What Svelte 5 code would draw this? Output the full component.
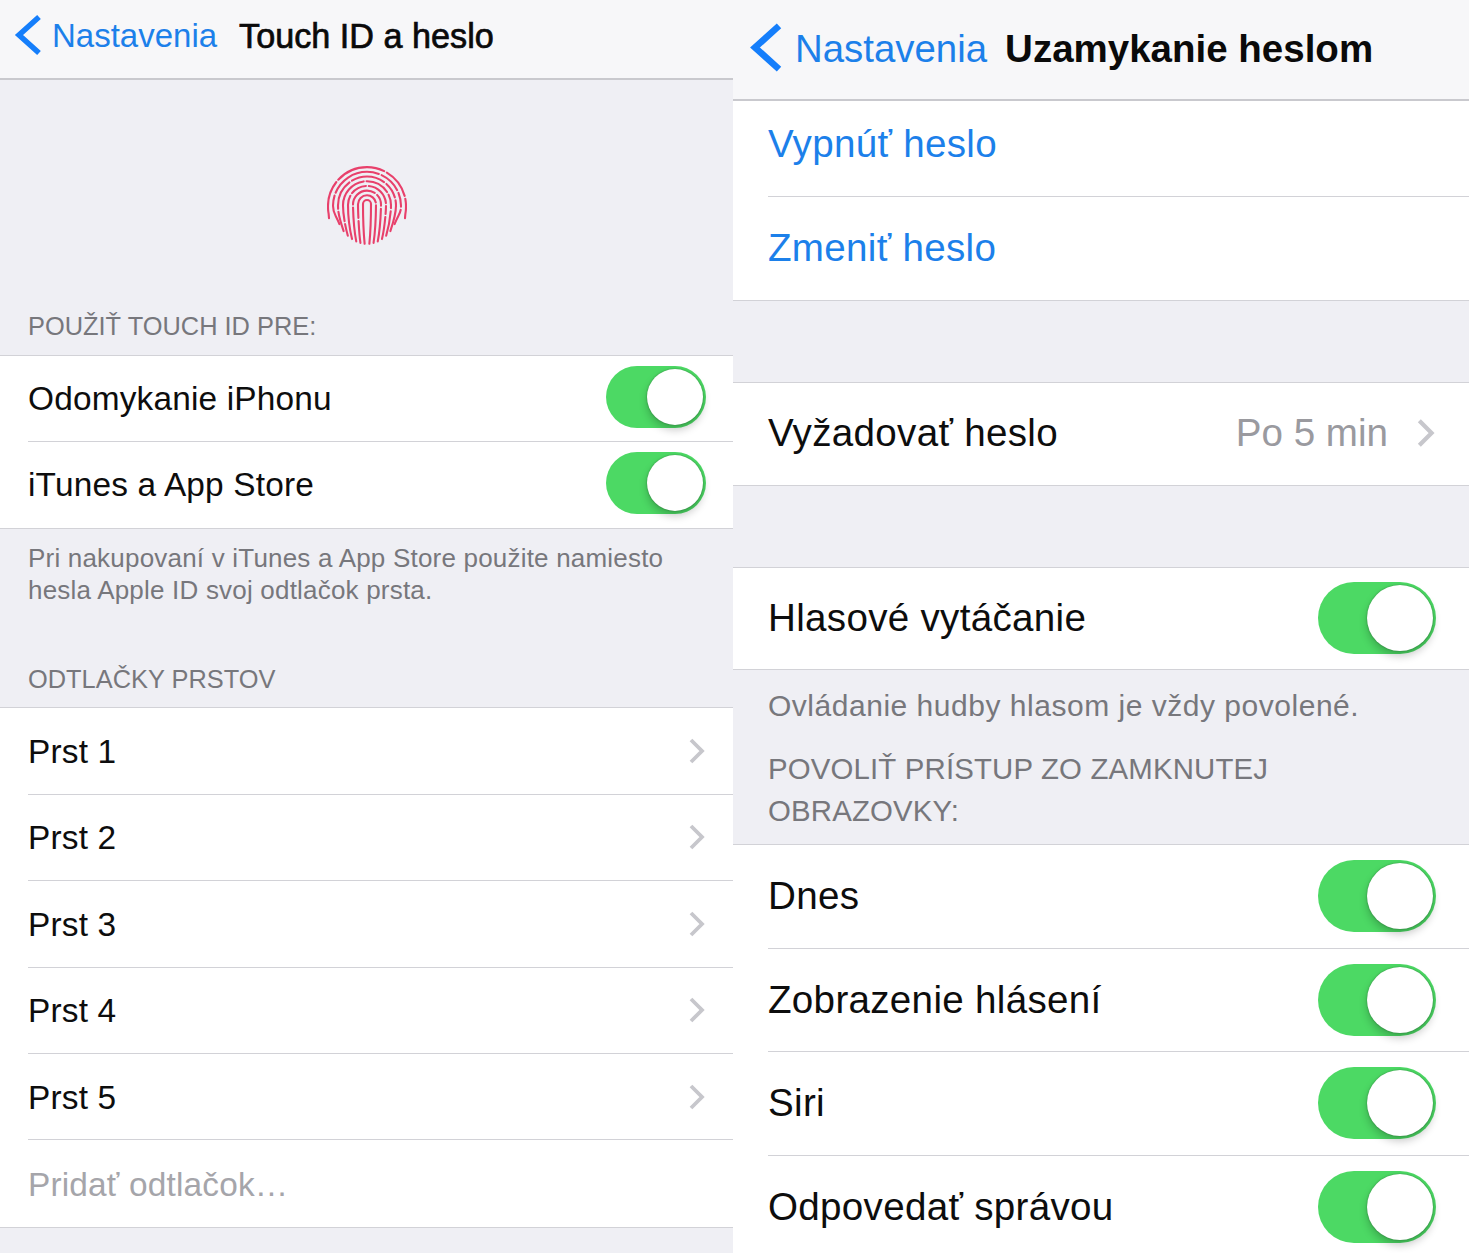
<script>
  const fingers = ['Prst 1', 'Prst 2', 'Prst 3', 'Prst 4', 'Prst 5'];
  const access = ['Dnes', 'Zobrazenie hlásení', 'Siri', 'Odpovedať správou'];
  const dashes = [
    '200 0', '22 3 40 3 100 0', '34 3 30 3 12 3 100 0', '44 3 16 3 26 3 8 3 100 0',
    '12 3 50 3 24 3 14 3 100 0', '20 3 30 3 34 3 16 3 100 0', '30 3 52 3 22 3 14 3 100 0', '38 3 50 3 30 3 100 0'
  ];
  const ridges = dashes.map((dash, k) => {
    const r = 4 + 5 * k;
    const cy = 38 + k * 0.3;
    const end = k === 7 ? cy + 12 : 40 + Math.sqrt(39 * 39 - r * r) - 1;
    const lean = k === 7 ? 1 : 1 + r * 0.16;
    const x1 = 40 - r, x2 = 40 + r;
    return {
      dash,
      d: `M${x1 + lean} ${end} C${x1 + lean * 0.4} ${end - 10} ${x1} ${cy + 8} ${x1} ${cy} A${r} ${r} 0 0 1 ${x2} ${cy} C${x2} ${cy + 8} ${x2 - lean * 0.4} ${end - 10} ${x2 - lean} ${end}`
    };
  });
</script>

<div class="screen">
  <section class="panel small">
    <header class="nav">
      <svg class="back" viewBox="0 0 30 44"><path d="M25 4 L5 22 L25 40" /></svg>
      <span class="back-label">Nastavenia</span>
      <span class="title">Touch ID a heslo</span>
    </header>

    <div class="hero">
      <svg class="print" viewBox="0 0 80 80">
        {#each ridges as ridge}
          <path d={ridge.d} stroke-dasharray={ridge.dash} />
        {/each}
      </svg>
    </div>

    <h2 class="caption first">POUŽIŤ TOUCH ID PRE:</h2>
    <div class="group">
      <div class="row"><span>Odomykanie iPhonu</span><span class="toggle"></span></div>
      <div class="row"><span>iTunes a App Store</span><span class="toggle"></span></div>
    </div>
    <p class="note">Pri nakupovaní v iTunes a App Store použite namiesto hesla Apple ID svoj odtlačok prsta.</p>

    <h2 class="caption second">ODTLAČKY PRSTOV</h2>
    <div class="group list">
      {#each fingers as finger}
        <div class="row">
          <span>{finger}</span>
          <svg class="chev" viewBox="0 0 18 28"><path d="M3 3 L14 14 L3 25" /></svg>
        </div>
      {/each}
      <div class="row"><span class="muted">Pridať odtlačok…</span></div>
    </div>
  </section>

  <section class="panel large">
    <header class="nav">
      <svg class="back" viewBox="0 0 30 44"><path d="M25 4 L5 22 L25 40" /></svg>
      <span class="back-label">Nastavenia</span>
      <span class="title">Uzamykanie heslom</span>
    </header>

    <div class="group flush">
      <div class="row"><span class="link">Vypnúť heslo</span></div>
      <div class="row"><span class="link">Zmeniť heslo</span></div>
    </div>

    <div class="group spaced">
      <div class="row">
        <span>Vyžadovať heslo</span>
        <span class="detail">Po 5 min</span>
        <svg class="chev" viewBox="0 0 18 28"><path d="M3 3 L14 14 L3 25" /></svg>
      </div>
    </div>

    <div class="group spaced">
      <div class="row"><span>Hlasové vytáčanie</span><span class="toggle"></span></div>
    </div>
    <p class="note">Ovládanie hudby hlasom je vždy povolené.</p>
    <h2 class="caption">POVOLIŤ PRÍSTUP ZO ZAMKNUTEJ OBRAZOVKY:</h2>

    <div class="group">
      {#each access as item}
        <div class="row"><span>{item}</span><span class="toggle"></span></div>
      {/each}
    </div>
  </section>
</div>

<style>
  :global(body) {
    margin: 0;
    background: #efeff4;
  }

  .screen {
    display: flex;
    height: 1253px;
    overflow: hidden;
    font-family: "Liberation Sans", Arial, sans-serif;
    background: #efeff4;
  }

  .panel {
    flex: none;
    box-sizing: border-box;
  }

  .small {
    width: 733px;
    --row: 86.2px;
    --inset: 28px;
    --right: 27px;
    --size: 33.4px;
    --track: 0.18px;
  }

  .large {
    width: 736px;
    --row: 103.5px;
    --inset: 35px;
    --right: 33px;
    --size: 38.6px;
    --track: 0.3px;
  }

  .nav {
    position: relative;
    z-index: 1;
    display: flex;
    align-items: center;
    box-sizing: border-box;
    background: #f7f7f9;
    border-bottom: 2px solid #c9c9ce;
  }

  .small .nav {
    height: 80px;
    padding: 0 0 6px 14px;
  }

  .large .nav {
    height: 101px;
    padding: 0 0 2px 16px;
  }

  .back {
    flex: none;
    fill: none;
    stroke: #157efb;
    stroke-width: 5.5;
  }

  .small .back {
    width: 30px;
    height: 44px;
    margin-bottom: 2px;
  }

  .large .back {
    width: 36px;
    height: 53px;
    margin-bottom: 2px;
  }

  .back-label {
    color: #1c80ea;
  }

  .small .back-label {
    margin-left: 8px;
    font-size: 33px;
  }

  .large .back-label {
    margin-left: 10px;
    font-size: 38.4px;
  }

  .title {
    color: #0a0a0a;
    -webkit-text-stroke: 0.7px #0a0a0a;
  }

  .small .title {
    margin-left: 22px;
    font-size: 34.2px;
  }

  .large .title {
    margin-left: 18px;
    font-size: 38.5px;
    font-weight: 700;
    -webkit-text-stroke: 0;
  }

  .hero {
    display: flex;
    justify-content: center;
    box-sizing: border-box;
    height: 235px;
    padding-top: 86px;
  }

  .print {
    width: 80px;
    height: 80px;
    fill: none;
    stroke: #e8406b;
    stroke-width: 2.1;
    stroke-linecap: round;
  }

  .caption {
    margin: 0;
    font-weight: 400;
    color: #77777c;
  }

  .small .caption {
    padding: 0 var(--inset);
    font-size: 25.4px;
    line-height: 30px;
  }

  .caption.first {
    margin-top: -4px;
    padding-bottom: 14px !important;
  }

  .caption.second {
    margin-top: 58px;
    padding-bottom: 13px !important;
  }

  .large .caption {
    padding: 22px var(--inset) 12px;
    font-size: 29.4px;
    line-height: 42px;
    max-width: 560px;
    letter-spacing: 0.15px;
  }

  .group {
    background: #fff;
    border-top: 1.5px solid #d2d2d7;
    border-bottom: 1.5px solid #d2d2d7;
  }

  .list {
    --row: 86.4px;
  }

  .list .row {
    padding-top: 2px;
  }

  .flush {
    margin-top: -8px;
    border-top: 0;
  }

  .spaced {
    margin-top: 81px;
  }

  .spaced .row {
    height: 101.5px;
    padding-bottom: 1px;
  }

  .row {
    display: flex;
    align-items: center;
    justify-content: space-between;
    box-sizing: border-box;
    height: var(--row);
    margin-left: var(--inset);
    padding-right: var(--right);
    font-size: var(--size);
    letter-spacing: var(--track);
    color: #0d0d0d;
    border-bottom: 1.5px solid #d2d2d7;
  }

  .row:last-child {
    border-bottom: 0;
  }

  .link {
    color: #1c80ea;
  }

  .muted {
    color: #a5a5aa;
  }

  .detail {
    margin-left: auto;
    margin-right: 28px;
    color: #9a9a9f;
    letter-spacing: 0;
  }

  .chev {
    flex: none;
    width: 18px;
    height: 28px;
    fill: none;
    stroke: #c7c7cc;
    stroke-width: 3.8;
  }

  .small .chev {
    margin-bottom: 2px;
  }

  .large .chev {
    width: 20px;
    height: 32px;
  }

  .toggle {
    position: relative;
    flex: none;
    border-radius: 999px;
    background: #4cd964;
  }

  .small .toggle {
    width: 100px;
    height: 62px;
    margin-bottom: 4px;
  }

  .large .toggle {
    width: 118px;
    height: 72px;
  }

  .toggle::after {
    content: "";
    position: absolute;
    top: 3px;
    right: 3px;
    bottom: 3px;
    aspect-ratio: 1;
    border-radius: 50%;
    background: #fff;
    box-shadow: 0 5px 8px rgba(0, 0, 0, 0.22), 0 0 2px rgba(0, 0, 0, 0.35);
  }

  .note {
    margin: 0;
    color: #77777c;
  }

  .small .note {
    padding: 13px 60px 0 var(--inset);
    font-size: 26px;
    line-height: 32px;
    letter-spacing: 0.2px;
  }

  .large .note {
    padding: 16px var(--inset) 0;
    font-size: 30px;
    line-height: 40px;
    letter-spacing: 0.52px;
  }
</style>
